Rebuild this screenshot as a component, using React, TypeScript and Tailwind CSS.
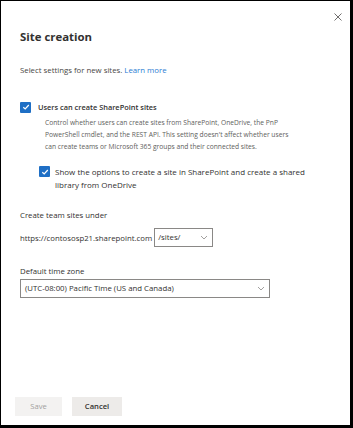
import React from "react";

const Check = () => (
  <span className="flex h-[11px] w-[11px] shrink-0 items-center justify-center rounded-[1px] bg-[#1f6fc5]">
    <svg width="8" height="8" viewBox="0 0 8 8" fill="none">
      <path d="M1.3 4.2 L3.2 6 L6.8 2" stroke="white" strokeWidth="1.2" />
    </svg>
  </span>
);

const Chevron = () => (
  <svg width="8" height="5" viewBox="0 0 8 5" fill="none">
    <path d="M1 1 L4 4 L7 1" stroke="#8a8886" strokeWidth="0.8" />
  </svg>
);

const App = () => {
  return (
    <div className="flex h-[428px] w-[353px] flex-col border-t border-r-[3px] border-b-[3px] border-l border-black bg-white font-['Open_Sans',sans-serif] text-[#323130]">
      <div className="flex justify-end pt-[12px] pr-[8px]">
        <svg width="8" height="8" viewBox="0 0 8 8" fill="none">
          <path d="M0.5 0.5 L7.5 7.5 M7.5 0.5 L0.5 7.5" stroke="#605e5c" strokeWidth="0.9" />
        </svg>
      </div>

      <div className="flex flex-col pl-[19px]">
        <h1 className="mt-[6px] text-[11.4px] leading-[20px] font-bold">Site creation</h1>

        <p className="mt-[17px] text-[7.8px] leading-[12px] text-[#484644]">
          Select settings for new sites. <span className="text-[#2b7cd3]">Learn more</span>
        </p>

        <div className="mt-[25px] flex items-center">
          <Check />
          <span className="ml-[7px] text-[7.4px] leading-[12px] font-semibold">
            Users can create SharePoint sites
          </span>
        </div>

        <p className="mt-[4px] ml-[25px] text-[6.7px] leading-[12px] whitespace-nowrap text-[#605e5c]">
          Control whether users can create sites from SharePoint, OneDrive, the PnP
          <br />
          PowerShell cmdlet, and the REST API. This setting doesn't affect whether users
          <br />
          can create teams or Microsoft 365 groups and their connected sites.
        </p>

        <div className="mt-[13px] ml-[19px] flex items-start">
          <Check />
          <span className="-mt-[1px] ml-[5px] text-[8px] leading-[13px] whitespace-nowrap">
            Show the options to create a site in SharePoint and create a shared
            <br />
            library from OneDrive
          </span>
        </div>

        <div className="mt-[18px] text-[7.8px] leading-[12px]">Create team sites under</div>

        <div className="mt-[7px] flex items-center">
          <span className="text-[7.8px] leading-[12px]">https://contososp21.sharepoint.com</span>
          <div className="ml-[2px] flex h-[19px] w-[59px] items-center justify-between border border-[#8a8886] pr-[4px] pl-[3px]">
            <span className="text-[7.8px]">/sites/</span>
            <Chevron />
          </div>
        </div>

        <div className="mt-[18px] text-[7.8px] leading-[12px]">Default time zone</div>

        <div className="mt-[2px] flex h-[19px] w-[250px] items-center justify-between border border-[#8a8886] pr-[4px] pl-[4px]">
          <span className="text-[7.8px]">(UTC-08:00) Pacific Time (US and Canada)</span>
          <Chevron />
        </div>
      </div>

      <div className="mt-auto flex gap-[10px] pb-[9px] pl-[14px]">
        <button className="h-[19px] w-[47px] bg-[#f3f2f1] text-[7.6px] text-[#a19f9d]">Save</button>
        <button className="h-[19px] w-[50px] bg-[#edebe9] text-[7.6px] font-semibold text-[#323130]">
          Cancel
        </button>
      </div>
    </div>
  );
};

export default App;
